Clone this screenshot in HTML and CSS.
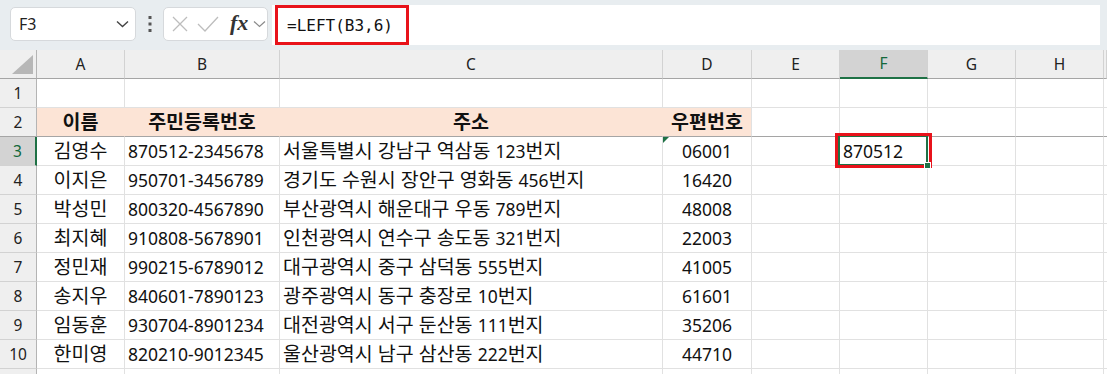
FILE: index.html
```html
<!DOCTYPE html>
<html lang="ko">
<head>
  <meta charset="UTF-8">
  <title>주민등록번호 - LEFT</title>
  <link rel="stylesheet" href="styles.css">
</head>
<body>
  <!-- Formula bar -->
  <div class="formula-bar">
    <div class="name-box">
      <span>F3</span>
      <svg class="chev" width="13" height="8" viewBox="0 0 13 8"><path d="M1 1.5 L6.5 6.5 L12 1.5" fill="none" stroke="#444" stroke-width="1.4"/></svg>
    </div>
    <div class="more-dots">
      <svg width="6" height="18" viewBox="0 0 6 18"><rect x="1.5" y="1" width="3" height="3" fill="#555"/><rect x="1.5" y="7.5" width="3" height="3" fill="#555"/><rect x="1.5" y="14" width="3" height="3" fill="#555"/></svg>
    </div>
    <div class="fx-group">
      <svg width="18" height="18" viewBox="0 0 18 18"><path d="M2 2 L16 16 M16 2 L2 16" stroke="#bdbdbd" stroke-width="1.3" fill="none"/></svg>
      <svg width="22" height="18" viewBox="0 0 22 18"><path d="M1 9 L8 16 L21 2" stroke="#bdbdbd" stroke-width="1.3" fill="none"/></svg>
      <span class="fx">fx</span>
      <svg width="13" height="8" viewBox="0 0 13 8"><path d="M1 1.5 L6.5 6.5 L12 1.5" fill="none" stroke="#8a8a8a" stroke-width="1.2"/></svg>
    </div>
    <div class="formula-input">
      <span class="formula-text">=LEFT(B3,6)</span>
      <div class="red-box formula-mark"></div>
    </div>
  </div>

  <!-- Sheet -->
  <div class="sheet">
    <div class="row head">
      <div class="cell corner"><span class="tri"></span></div>
      <div class="cell hdr">A</div>
      <div class="cell hdr">B</div>
      <div class="cell hdr">C</div>
      <div class="cell hdr">D</div>
      <div class="cell hdr">E</div>
      <div class="cell hdr active">F</div>
      <div class="cell hdr">G</div>
      <div class="cell hdr">H</div>
      <div class="cell hdr"></div>
    </div>

    <div class="row">
      <div class="cell rh">1</div>
      <div class="cell"></div><div class="cell"></div><div class="cell"></div><div class="cell"></div>
      <div class="cell"></div><div class="cell"></div><div class="cell"></div><div class="cell"></div><div class="cell"></div>
    </div>

    <div class="row frozen">
      <div class="cell rh">2</div>
      <div class="cell peach join c b ko">이름</div>
      <div class="cell peach join c b ko">주민등록번호</div>
      <div class="cell peach join c b ko">주소</div>
      <div class="cell peach c b ko">우편번호</div>
      <div class="cell"></div><div class="cell"></div><div class="cell"></div><div class="cell"></div><div class="cell"></div>
    </div>

    <div class="row">
      <div class="cell rh active">3</div>
      <div class="cell c ko">김영수</div>
      <div class="cell">870512-2345678</div>
      <div class="cell ko">서울특별시 강남구 역삼동 <span class="n">123</span>번지</div>
      <div class="cell c flag">06001</div>
      <div class="cell"></div>
      <div class="cell selected">870512<span class="handle"></span><div class="red-box cell-mark"></div></div>
      <div class="cell"></div><div class="cell"></div><div class="cell"></div>
    </div>

    <div class="row">
      <div class="cell rh">4</div>
      <div class="cell c ko">이지은</div>
      <div class="cell">950701-3456789</div>
      <div class="cell ko">경기도 수원시 장안구 영화동 <span class="n">456</span>번지</div>
      <div class="cell c">16420</div>
      <div class="cell"></div><div class="cell"></div><div class="cell"></div><div class="cell"></div><div class="cell"></div>
    </div>

    <div class="row">
      <div class="cell rh">5</div>
      <div class="cell c ko">박성민</div>
      <div class="cell">800320-4567890</div>
      <div class="cell ko">부산광역시 해운대구 우동 <span class="n">789</span>번지</div>
      <div class="cell c">48008</div>
      <div class="cell"></div><div class="cell"></div><div class="cell"></div><div class="cell"></div><div class="cell"></div>
    </div>

    <div class="row">
      <div class="cell rh">6</div>
      <div class="cell c ko">최지혜</div>
      <div class="cell">910808-5678901</div>
      <div class="cell ko">인천광역시 연수구 송도동 <span class="n">321</span>번지</div>
      <div class="cell c">22003</div>
      <div class="cell"></div><div class="cell"></div><div class="cell"></div><div class="cell"></div><div class="cell"></div>
    </div>

    <div class="row">
      <div class="cell rh">7</div>
      <div class="cell c ko">정민재</div>
      <div class="cell">990215-6789012</div>
      <div class="cell ko">대구광역시 중구 삼덕동 <span class="n">555</span>번지</div>
      <div class="cell c">41005</div>
      <div class="cell"></div><div class="cell"></div><div class="cell"></div><div class="cell"></div><div class="cell"></div>
    </div>

    <div class="row">
      <div class="cell rh">8</div>
      <div class="cell c ko">송지우</div>
      <div class="cell">840601-7890123</div>
      <div class="cell ko">광주광역시 동구 충장로 <span class="n">10</span>번지</div>
      <div class="cell c">61601</div>
      <div class="cell"></div><div class="cell"></div><div class="cell"></div><div class="cell"></div><div class="cell"></div>
    </div>

    <div class="row">
      <div class="cell rh">9</div>
      <div class="cell c ko">임동훈</div>
      <div class="cell">930704-8901234</div>
      <div class="cell ko">대전광역시 서구 둔산동 <span class="n">111</span>번지</div>
      <div class="cell c">35206</div>
      <div class="cell"></div><div class="cell"></div><div class="cell"></div><div class="cell"></div><div class="cell"></div>
    </div>

    <div class="row">
      <div class="cell rh">10</div>
      <div class="cell c ko">한미영</div>
      <div class="cell">820210-9012345</div>
      <div class="cell ko">울산광역시 남구 삼산동 <span class="n">222</span>번지</div>
      <div class="cell c">44710</div>
      <div class="cell"></div><div class="cell"></div><div class="cell"></div><div class="cell"></div><div class="cell"></div>
    </div>

    <!-- row 11, only its top edge shows -->
    <div class="row">
      <div class="cell rh"></div>
      <div class="cell"></div><div class="cell"></div><div class="cell"></div><div class="cell"></div>
      <div class="cell"></div><div class="cell"></div><div class="cell"></div><div class="cell"></div><div class="cell"></div>
    </div>
  </div>
</body>
</html>
```

FILE: styles.css
```css
/* Reset */
* {
  margin: 0;
  padding: 0;
  box-sizing: border-box;
}

body {
  width: 1107px;
  height: 374px;
  overflow: hidden;
  background-color: #ffffff;
  font-family: 'Noto Sans', 'Noto Sans CJK KR', sans-serif;
  color: #111111;
}

/* Formula bar */
.formula-bar {
  height: 50px;
  background-color: #e8edf0;
  display: flex;
  align-items: flex-start;
  padding: 7px 0 0 10px;
}

.name-box {
  width: 126px;
  height: 34px;
  background-color: #ffffff;
  border: 1px solid #d6d9dc;
  border-radius: 5px;
  display: flex;
  align-items: center;
  justify-content: space-between;
  padding: 0 6px 0 8px;
  font-size: 16px;
  color: #222222;
}

.more-dots {
  width: 27px;
  height: 34px;
  display: flex;
  align-items: center;
  justify-content: center;
}

.fx-group {
  width: 105px;
  height: 34px;
  background-color: #ffffff;
  border: 1px solid #d6d9dc;
  border-radius: 5px;
  display: flex;
  align-items: center;
  gap: 8px;
  padding-left: 7px;
}

.fx-group .fx {
  font-family: 'Liberation Serif', serif;
  font-style: italic;
  font-weight: bold;
  font-size: 22px;
  color: #333333;
  margin: -3px -3px 0 3px;
}

.formula-input {
  position: relative;
  margin: -2px 0 0 4px;
  width: 828px;
  height: 40px;
  background-color: #ffffff;
  display: flex;
  align-items: center;
  padding-left: 15px;
}

.formula-text {
  font-family: 'DejaVu Sans Mono', monospace;
  font-size: 16px;
  color: #111111;
}

/* Red highlight boxes */
.red-box {
  position: absolute;
  border: 3px solid #e8131b;
  pointer-events: none;
}

.formula-mark {
  left: 3px;
  top: 0;
  width: 134px;
  height: 40px;
}

.cell-mark {
  top: -4px;
  left: -5px;
  right: -5px;
  bottom: -3px;
  z-index: 3;
}

/* Sheet grid */
.row {
  display: grid;
  grid-template-columns: 37px 88px 155px 383px 89px 88px 88px 88px 88px 1fr;
  height: 29px;
}

.cell {
  position: relative;
  border-right: 1px solid #e1e1e1;
  border-bottom: 1px solid #e1e1e1;
  padding-left: 3px;
  font-size: 17.5px;
  line-height: 28px;
  white-space: nowrap;
}

/* Hangul runs a size larger than the digits, like Malgun Gothic */
.cell.ko {
  font-size: 19.5px;
}

.cell.ko .n {
  font-size: 17.5px;
}

.cell.c {
  text-align: center;
  padding-left: 0;
}

.cell.b {
  font-weight: bold;
}

/* Headers */
.head .cell {
  background-color: #efefef;
  border-right-color: #d2d2d2;
  border-bottom-color: #a5a5a5;
  text-align: center;
  padding: 0;
  font-size: 15.5px;
  color: #222222;
}

.head .corner {
  border-right-color: #b4b4b4;
  display: flex;
  justify-content: flex-end;
  align-items: flex-end;
  padding: 0 3px 4px 0;
}

.corner .tri {
  width: 0;
  height: 0;
  border-left: 21px solid transparent;
  border-bottom: 19px solid #b7b7b7;
}

.head .hdr.active {
  background-color: #d3d3d3;
  color: #13683a;
  border-bottom: 2px solid #1e7145;
  line-height: 27px;
}

.cell.rh {
  background-color: #efefef;
  border-right-color: #b4b4b4;
  border-bottom-color: #d2d2d2;
  text-align: center;
  padding: 0;
  font-size: 15.5px;
  color: #222222;
}

.cell.rh.active {
  background-color: #d3d3d3;
  color: #13683a;
  border-right: 2px solid #1e7145;
}

/* Title row */
.cell.peach {
  background-color: #fce4d6;
}

.cell.join {
  border-right-color: #fce4d6;
}

.frozen .cell {
  border-bottom-color: #a5a5a5;
}

/* Error flag (number stored as text) */
.cell.flag::before {
  content: "";
  position: absolute;
  top: 0;
  left: 0;
  border-top: 6px solid #1e7145;
  border-right: 6px solid transparent;
}

/* Active cell */
.cell.selected::after {
  content: "";
  position: absolute;
  top: -2px;
  left: -2px;
  right: -1px;
  bottom: -1px;
  border: 2px solid #1e7145;
  z-index: 2;
}

.cell .handle {
  position: absolute;
  right: -4px;
  bottom: -4px;
  width: 7px;
  height: 7px;
  background-color: #1e7145;
  border: 1px solid #ffffff;
  z-index: 4;
}
```
